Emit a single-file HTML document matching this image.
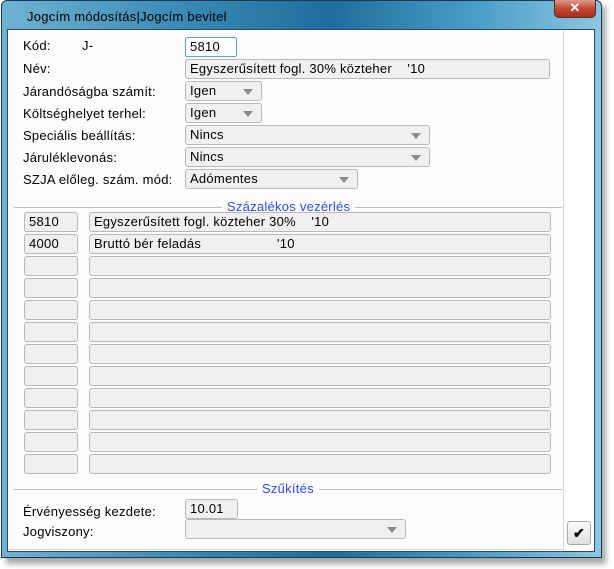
<!DOCTYPE html>
<html><head><meta charset="utf-8"><style>
*{box-sizing:border-box}
body{margin:0;width:614px;height:569px;background:#fff;position:relative;overflow:hidden;font-family:"Liberation Sans",sans-serif;font-size:13px;color:#000;letter-spacing:0.25px}
.shadow{position:absolute;left:6px;top:6px;width:600px;height:558px;background:rgba(0,0,0,.35);filter:blur(3px)}
.win{position:absolute;left:1px;top:0;width:601px;height:558px;border:1px solid #1a3a5a;border-radius:6px 6px 0 0;background:linear-gradient(90deg,#6fb3d2 0%,#3a8ab5 30%,#1f6d9c 55%,#4c9fc8 80%,#8cc6e0 100%)}
.title{position:absolute;left:25px;top:8px;font-size:13px;color:#000}
.close{position:absolute;left:552px;top:-1px;width:42px;height:18px;border:1px solid #5a2a22;border-top:none;border-radius:0 0 5px 5px;background:linear-gradient(#e09a88,#c24a32 50%,#a8311c);color:#fff;font-weight:bold;text-align:center;font-size:13px;line-height:16px}
.client{position:absolute;left:7px;top:29px;width:588px;height:523px;background:#fff;border:1px solid #2a4a66}
.l{position:absolute;font-size:13px}
.box{position:absolute;height:20px;border:1px solid #b8b8b8;border-radius:3px;background:#f0f0f0;padding-left:4px;line-height:18px;font-size:13px}
.dd::after{content:"";position:absolute;right:8px;top:7px;border:5px solid transparent;border-top:6px solid #8a8a8a;border-bottom:none}
.sec{position:absolute;left:14px;width:548px;height:1px;background:#bdbdbd}
.sec span{position:absolute;top:-8px;background:#fcfcfc;color:#2a4cf0;padding:0 5px;font-size:13px;line-height:15px}
</style></head><body>
<div class="shadow"></div>
<div class="win">
<div class="title">Jogcím módosítás|Jogcím bevitel</div>
<div class="close">✕</div>
</div>
<div class="client"></div>
<div style="position:absolute;left:8px;top:30px;width:556px;height:520px;background:#fcfcfc;border-right:1px solid #d6d6d6;border-bottom:1px solid #d6d6d6"></div>

<div class="l" style="left:23px;top:38px">Kód:</div>
<div class="l" style="left:82px;top:38px">J-</div>
<div class="box" style="left:185px;top:37px;width:52px;background:#fff;border-color:#5a9fd8;border-radius:2px">5810</div>
<div class="l" style="left:23px;top:61px">Név:</div>
<div class="box" style="left:185px;top:59px;width:365px">Egyszerűsített fogl. 30% közteher &nbsp;&nbsp;&nbsp;'10</div>
<div class="l" style="left:23px;top:84px">Járandóságba számít:</div>
<div class="box dd" style="left:185px;top:81px;width:77px">Igen</div>
<div class="l" style="left:23px;top:106px">Költséghelyet terhel:</div>
<div class="box dd" style="left:185px;top:103px;width:77px">Igen</div>
<div class="l" style="left:23px;top:128px">Speciális beállítás:</div>
<div class="box dd" style="left:185px;top:125px;width:245px">Nincs</div>
<div class="l" style="left:23px;top:150px">Járuléklevonás:</div>
<div class="box dd" style="left:185px;top:147px;width:245px">Nincs</div>
<div class="l" style="left:23px;top:172px">SZJA előleg. szám. mód:</div>
<div class="box dd" style="left:185px;top:169px;width:173px">Adómentes</div>

<div class="sec" style="top:207px"><span style="left:208px">Százalékos vezérlés</span></div>

<div class="box" style="left:24px;top:212px;width:54px">5810</div>
<div class="box" style="left:89px;top:212px;width:462px">Egyszerűsített fogl. közteher 30% &nbsp;&nbsp;&nbsp;'10</div>
<div class="box" style="left:24px;top:234px;width:54px">4000</div>
<div class="box" style="left:89px;top:234px;width:462px">Bruttó bér feladás <span style="position:absolute;left:187px">'10</span></div>
<div class="box" style="left:24px;top:256px;width:54px"></div><div class="box" style="left:89px;top:256px;width:462px"></div>
<div class="box" style="left:24px;top:278px;width:54px"></div><div class="box" style="left:89px;top:278px;width:462px"></div>
<div class="box" style="left:24px;top:300px;width:54px"></div><div class="box" style="left:89px;top:300px;width:462px"></div>
<div class="box" style="left:24px;top:322px;width:54px"></div><div class="box" style="left:89px;top:322px;width:462px"></div>
<div class="box" style="left:24px;top:344px;width:54px"></div><div class="box" style="left:89px;top:344px;width:462px"></div>
<div class="box" style="left:24px;top:366px;width:54px"></div><div class="box" style="left:89px;top:366px;width:462px"></div>
<div class="box" style="left:24px;top:388px;width:54px"></div><div class="box" style="left:89px;top:388px;width:462px"></div>
<div class="box" style="left:24px;top:410px;width:54px"></div><div class="box" style="left:89px;top:410px;width:462px"></div>
<div class="box" style="left:24px;top:432px;width:54px"></div><div class="box" style="left:89px;top:432px;width:462px"></div>
<div class="box" style="left:24px;top:454px;width:54px"></div><div class="box" style="left:89px;top:454px;width:462px"></div>

<div class="sec" style="top:489px"><span style="left:243px">Szűkítés</span></div>

<div class="l" style="left:23px;top:504px">Érvényesség kezdete:</div>
<div class="box" style="left:185px;top:499px;width:53px">10.01</div>
<div class="l" style="left:23px;top:524px">Jogviszony:</div>
<div class="box dd" style="left:185px;top:519px;width:221px"></div>
<div style="position:absolute;left:567px;top:521px;width:24px;height:24px;border:1px solid #a8a8a8;border-radius:3px;background:linear-gradient(#fafafa,#e0e0e0);text-align:center;line-height:22px;font-size:14px;font-weight:bold">✔</div>
</body></html>
